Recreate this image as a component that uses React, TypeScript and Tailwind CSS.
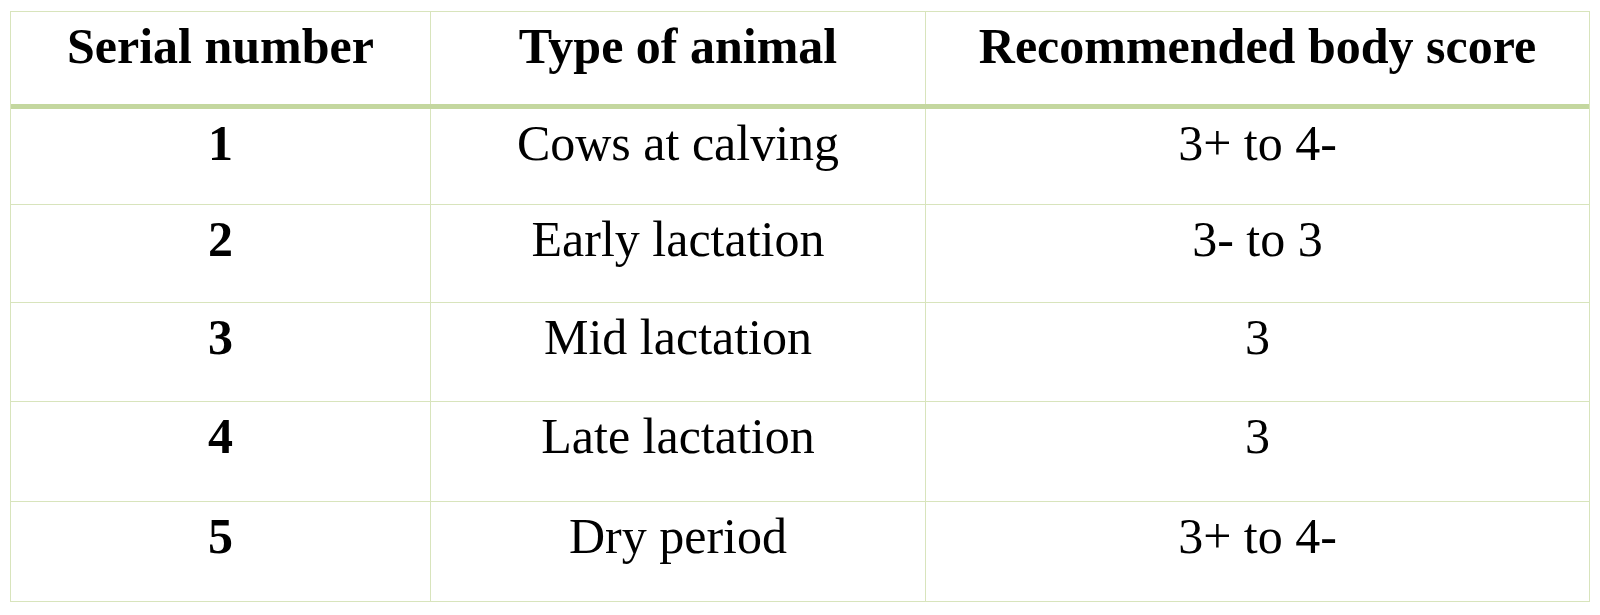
import React from "react";

const rows: { n: string; type: string; score: string; h: string }[] = [
  { n: "1", type: "Cows at calving", score: "3+ to 4-", h: "h-[96px]" },
  { n: "2", type: "Early lactation", score: "3- to 3", h: "h-[98px]" },
  { n: "3", type: "Mid lactation", score: "3", h: "h-[99px]" },
  { n: "4", type: "Late lactation", score: "3", h: "h-[100px]" },
  { n: "5", type: "Dry period", score: "3+ to 4-", h: "h-[99px]" },
];

export default function App() {
  return (
    <div
      className="w-[1600px] h-[615px] bg-white pt-[11px] pl-[10px]"
      style={{ fontFamily: '"Liberation Serif", "Times New Roman", serif' }}
    >
      <div className="w-[1580px] border border-[#d8e4bc] text-black text-[50px] leading-[50px]">
        <div className="flex h-[97px] border-b-[5px] border-[#c4d79f] font-bold">
          <div className="w-[420px] border-r border-[#d8e4bc] text-center pt-[9px]">Serial number</div>
          <div className="w-[495px] border-r border-[#d8e4bc] text-center pt-[9px]">Type of animal</div>
          <div className="w-[663px] text-center pt-[9px]">Recommended body score</div>
        </div>
        {rows.map((r, i) => (
          <div
            key={r.n}
            className={`flex ${r.h} ${i < rows.length - 1 ? "border-b border-[#d8e4bc]" : ""}`}
          >
            <div className="w-[420px] border-r border-[#d8e4bc] text-center pt-[9px] font-bold">{r.n}</div>
            <div className="w-[495px] border-r border-[#d8e4bc] text-center pt-[9px]">{r.type}</div>
            <div className="w-[663px] text-center pt-[9px]">{r.score}</div>
          </div>
        ))}
      </div>
    </div>
  );
}
